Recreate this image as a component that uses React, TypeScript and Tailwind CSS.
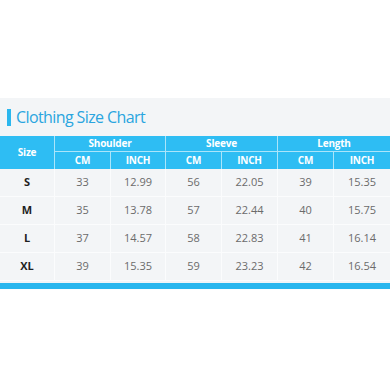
const groups = ['Shoulder', 'Sleeve', 'Length'];

const rows = [
  { size: 'S', values: ['33', '12.99', '56', '22.05', '39', '15.35'] },
  { size: 'M', values: ['35', '13.78', '57', '22.44', '40', '15.75'] },
  { size: 'L', values: ['37', '14.57', '58', '22.83', '41', '16.14'] },
  { size: 'XL', values: ['39', '15.35', '59', '23.23', '42', '16.54'] },
];

const cols = 'grid grid-cols-[55px_56px_55px_56px_56px_56px_56px]';

export default function App() {
  return (
    <div className="w-[390px] h-[390px] bg-white font-['Open_Sans',sans-serif]">
      <div className="h-[98px]" />
      <div className="bg-[#f3f5f7]">
        <div className="h-[38px] flex items-center pl-[7px] gap-[5px]">
          <div className="w-[4px] h-[17px] bg-[#2bb7ee]" />
          <h1 className="text-[16px] tracking-[-0.6px] text-[#2aa5df] leading-none">Clothing Size Chart</h1>
        </div>

        <div className={`${cols} bg-[#2ebdf3] text-white font-bold text-[10px] tracking-[-0.2px]`}>
          <div className="row-span-2 flex items-center justify-center border-r border-white/60">
            Size
          </div>
          {groups.map((g, i) => (
            <div
              key={g}
              className={`col-span-2 h-[16px] flex items-center justify-center border-b border-white/60 ${
                i < 2 ? 'border-r' : ''
              }`}
            >
              {g}
            </div>
          ))}
          {groups.map((g, i) => (
            <>
              <div key={g + 'cm'} className="h-[17px] flex items-center justify-center border-r border-white/60">
                CM
              </div>
              <div
                key={g + 'in'}
                className={`h-[17px] flex items-center justify-center border-white/60 ${i < 2 ? 'border-r' : ''}`}
              >
                INCH
              </div>
            </>
          ))}
        </div>

        {rows.map((r) => (
          <div key={r.size} className={`${cols} h-[28px] border-b border-[#fbfcfd] text-[11px]`}>
            <div className="flex items-center justify-center font-bold text-[#1f1f1f] border-r border-[#fbfcfd]">
              {r.size}
            </div>
            {r.values.map((v, j) => (
              <div
                key={j}
                className={`flex items-center justify-center text-[#6b6b6b] ${j < 5 ? 'border-r border-[#fbfcfd]' : ''}`}
              >
                {v}
              </div>
            ))}
          </div>
        ))}
        <div className="h-[2px]" />
      </div>
      <div className="h-[6px] bg-[#2bb7ee]" />
    </div>
  );
}
